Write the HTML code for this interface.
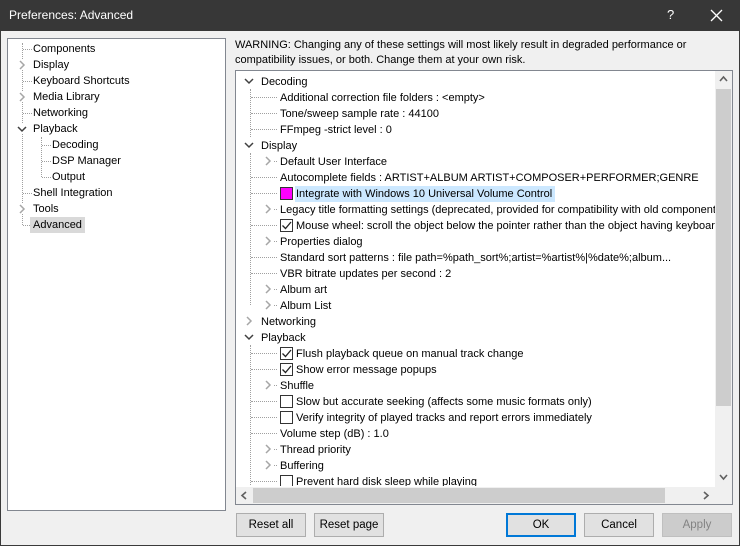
<!DOCTYPE html>
<html><head><meta charset="utf-8"><style>
*{margin:0;padding:0;box-sizing:border-box}
body{width:740px;height:546px;position:relative;overflow:hidden;background:#f0f0f0;font-family:"Liberation Sans",sans-serif;font-size:11px;color:#000}
.title{position:absolute;left:0;top:0;width:740px;height:31px;background:#373737;color:#fff;font-size:12px}
.frame{position:absolute;left:0;top:31px;width:740px;height:515px;border:1px solid #3a3a3a;border-top:none}
.box{position:absolute;background:#fff;border:1px solid #828790;overflow:hidden}
.r{position:absolute;height:16px;line-height:16px;white-space:nowrap}
.v{position:absolute;border-left:1px dotted #a0a0a0;width:0}
.h{position:absolute;border-top:1px dotted #a0a0a0;height:0}
.c{position:absolute;width:10px;height:10px;background:#fff}
.cb{position:absolute;width:13px;height:13px;border:1px solid #333;background:#fff}
.btn{position:absolute;top:513px;height:24px;border:1px solid #adadad;background:#e1e1e1;text-align:center;line-height:22px;font-size:11.5px}
</style></head><body>
<div class="title"><span style="position:absolute;left:9px;top:8px">Preferences: Advanced</span>
<span style="position:absolute;left:667px;top:7px;font-size:13px">?</span>
<svg style="position:absolute;left:710px;top:9px" width="13" height="13"><path d="M1 1L12 12M12 1L1 12" stroke="#fff" stroke-width="1.3"/></svg></div>
<div class="frame"></div>

<div class="box" style="left:7px;top:38px;width:219px;height:473px">
<div class="v" style="left:14px;top:4px;height:182px"></div>
<div class="v" style="left:33px;top:98px;height:40px"></div>
<div class="h" style="left:15px;top:10px;width:9px"></div>
<div class="h" style="left:15px;top:42px;width:9px"></div>
<div class="h" style="left:15px;top:74px;width:9px"></div>
<div class="h" style="left:15px;top:154px;width:9px"></div>
<div class="h" style="left:15px;top:186px;width:9px"></div>
<div class="h" style="left:34px;top:106px;width:9px"></div>
<div class="h" style="left:34px;top:122px;width:9px"></div>
<div class="h" style="left:34px;top:138px;width:9px"></div>
<svg class="c" style="left:9px;top:21px"><path d="M3 1L7 5L3 9" stroke="#a6a6a6" fill="none" stroke-width="1.5"/></svg>
<svg class="c" style="left:9px;top:53px"><path d="M3 1L7 5L3 9" stroke="#a6a6a6" fill="none" stroke-width="1.5"/></svg>
<svg class="c" style="left:9px;top:85px"><path d="M1 3L5 7L9 3" stroke="#404040" fill="none" stroke-width="1.5"/></svg>
<svg class="c" style="left:9px;top:165px"><path d="M3 1L7 5L3 9" stroke="#a6a6a6" fill="none" stroke-width="1.5"/></svg>
<div class="r" style="left:25px;top:2px">Components</div>
<div class="r" style="left:25px;top:18px">Display</div>
<div class="r" style="left:25px;top:34px">Keyboard Shortcuts</div>
<div class="r" style="left:25px;top:50px">Media Library</div>
<div class="r" style="left:25px;top:66px">Networking</div>
<div class="r" style="left:25px;top:82px">Playback</div>
<div class="r" style="left:44px;top:98px">Decoding</div>
<div class="r" style="left:44px;top:114px">DSP Manager</div>
<div class="r" style="left:44px;top:130px">Output</div>
<div class="r" style="left:25px;top:146px">Shell Integration</div>
<div class="r" style="left:25px;top:162px">Tools</div>
<div class="r" style="left:22px;top:178px;background:#d9d9d9;padding:0 3px">Advanced</div>
</div>

<div style="position:absolute;left:235px;top:38px;line-height:15px;width:495px">WARNING: Changing any of these settings will most likely result in degraded performance or compatibility issues, or both. Change them at your own risk.</div>

<div class="box" style="left:235px;top:70px;width:498px;height:435px">
<div style="position:absolute;left:0;top:0;width:479px;height:415px;overflow:hidden">
<div class="v" style="left:14px;top:18px;height:48px"></div>
<div class="v" style="left:14px;top:82px;height:152px"></div>
<div class="v" style="left:14px;top:274px;height:150px"></div>
<div class="h" style="left:15px;top:26px;width:26px"></div>
<div class="h" style="left:15px;top:42px;width:26px"></div>
<div class="h" style="left:15px;top:58px;width:26px"></div>
<div class="h" style="left:15px;top:106px;width:26px"></div>
<div class="h" style="left:15px;top:122px;width:26px"></div>
<div class="h" style="left:15px;top:154px;width:26px"></div>
<div class="h" style="left:15px;top:186px;width:26px"></div>
<div class="h" style="left:15px;top:202px;width:26px"></div>
<div class="h" style="left:15px;top:282px;width:26px"></div>
<div class="h" style="left:15px;top:298px;width:26px"></div>
<div class="h" style="left:15px;top:330px;width:26px"></div>
<div class="h" style="left:15px;top:346px;width:26px"></div>
<div class="h" style="left:15px;top:362px;width:26px"></div>
<div class="h" style="left:15px;top:410px;width:26px"></div>
<div class="h" style="left:38px;top:90px;width:3px"></div>
<div class="h" style="left:38px;top:138px;width:3px"></div>
<div class="h" style="left:38px;top:170px;width:3px"></div>
<div class="h" style="left:38px;top:218px;width:3px"></div>
<div class="h" style="left:38px;top:234px;width:3px"></div>
<div class="h" style="left:38px;top:314px;width:3px"></div>
<div class="h" style="left:38px;top:378px;width:3px"></div>
<div class="h" style="left:38px;top:394px;width:3px"></div>
<svg class="c" style="left:8px;top:5px"><path d="M1 3L5 7L9 3" stroke="#404040" fill="none" stroke-width="1.5"/></svg>
<svg class="c" style="left:8px;top:69px"><path d="M1 3L5 7L9 3" stroke="#404040" fill="none" stroke-width="1.5"/></svg>
<svg class="c" style="left:8px;top:245px"><path d="M3 1L7 5L3 9" stroke="#a6a6a6" fill="none" stroke-width="1.5"/></svg>
<svg class="c" style="left:8px;top:261px"><path d="M1 3L5 7L9 3" stroke="#404040" fill="none" stroke-width="1.5"/></svg>
<svg class="c" style="left:27px;top:85px"><path d="M3 1L7 5L3 9" stroke="#a6a6a6" fill="none" stroke-width="1.5"/></svg>
<svg class="c" style="left:27px;top:133px"><path d="M3 1L7 5L3 9" stroke="#a6a6a6" fill="none" stroke-width="1.5"/></svg>
<svg class="c" style="left:27px;top:165px"><path d="M3 1L7 5L3 9" stroke="#a6a6a6" fill="none" stroke-width="1.5"/></svg>
<svg class="c" style="left:27px;top:213px"><path d="M3 1L7 5L3 9" stroke="#a6a6a6" fill="none" stroke-width="1.5"/></svg>
<svg class="c" style="left:27px;top:229px"><path d="M3 1L7 5L3 9" stroke="#a6a6a6" fill="none" stroke-width="1.5"/></svg>
<svg class="c" style="left:27px;top:309px"><path d="M3 1L7 5L3 9" stroke="#a6a6a6" fill="none" stroke-width="1.5"/></svg>
<svg class="c" style="left:27px;top:373px"><path d="M3 1L7 5L3 9" stroke="#a6a6a6" fill="none" stroke-width="1.5"/></svg>
<svg class="c" style="left:27px;top:389px"><path d="M3 1L7 5L3 9" stroke="#a6a6a6" fill="none" stroke-width="1.5"/></svg>
<div class="cb" style="left:44px;top:116px;background:#ff00ff"></div>
<div class="cb" style="left:44px;top:148px"><svg width="11" height="11" style="position:absolute;left:0;top:0"><path d="M1.5 5.5L4.5 8.5L10 2" stroke="#222" fill="none" stroke-width="1.3"/></svg></div>
<div class="cb" style="left:44px;top:276px"><svg width="11" height="11" style="position:absolute;left:0;top:0"><path d="M1.5 5.5L4.5 8.5L10 2" stroke="#222" fill="none" stroke-width="1.3"/></svg></div>
<div class="cb" style="left:44px;top:292px"><svg width="11" height="11" style="position:absolute;left:0;top:0"><path d="M1.5 5.5L4.5 8.5L10 2" stroke="#222" fill="none" stroke-width="1.3"/></svg></div>
<div class="cb" style="left:44px;top:324px"></div>
<div class="cb" style="left:44px;top:340px"></div>
<div class="cb" style="left:44px;top:404px"></div>
<div class="r" style="left:25px;top:3px">Decoding</div>
<div class="r" style="left:44px;top:19px">Additional correction file folders : &lt;empty&gt;</div>
<div class="r" style="left:44px;top:35px">Tone/sweep sample rate : 44100</div>
<div class="r" style="left:44px;top:51px">FFmpeg -strict level : 0</div>
<div class="r" style="left:25px;top:67px">Display</div>
<div class="r" style="left:44px;top:83px">Default User Interface</div>
<div class="r" style="left:44px;top:99px">Autocomplete fields : ARTIST+ALBUM ARTIST+COMPOSER+PERFORMER;GENRE</div>
<div class="r" style="left:59px;top:115px;background:#cce8ff;padding:0 3px 0 1px">Integrate with Windows 10 Universal Volume Control</div>
<div class="r" style="left:44px;top:131px">Legacy title formatting settings (deprecated, provided for compatibility with old components)</div>
<div class="r" style="left:60px;top:147px">Mouse wheel: scroll the object below the pointer rather than the object having keyboard focus</div>
<div class="r" style="left:44px;top:163px">Properties dialog</div>
<div class="r" style="left:44px;top:179px">Standard sort patterns : file path=%path_sort%;artist=%artist%|%date%;album...</div>
<div class="r" style="left:44px;top:195px">VBR bitrate updates per second : 2</div>
<div class="r" style="left:44px;top:211px">Album art</div>
<div class="r" style="left:44px;top:227px">Album List</div>
<div class="r" style="left:25px;top:243px">Networking</div>
<div class="r" style="left:25px;top:259px">Playback</div>
<div class="r" style="left:60px;top:275px">Flush playback queue on manual track change</div>
<div class="r" style="left:60px;top:291px">Show error message popups</div>
<div class="r" style="left:44px;top:307px">Shuffle</div>
<div class="r" style="left:60px;top:323px">Slow but accurate seeking (affects some music formats only)</div>
<div class="r" style="left:60px;top:339px">Verify integrity of played tracks and report errors immediately</div>
<div class="r" style="left:44px;top:355px">Volume step (dB) : 1.0</div>
<div class="r" style="left:44px;top:371px">Thread priority</div>
<div class="r" style="left:44px;top:387px">Buffering</div>
<div class="r" style="left:60px;top:403px">Prevent hard disk sleep while playing</div>
</div>
<div style="position:absolute;left:479px;top:0;width:17px;height:416px;background:#f0f0f0">
<svg style="position:absolute;left:4px;top:4px" width="9" height="8"><path d="M1 6L4.5 2L8 6" stroke="#606060" fill="none" stroke-width="1.6"/></svg>
<div style="position:absolute;left:1px;top:18px;width:15px;height:317px;background:#cdcdcd"></div>
<svg style="position:absolute;left:4px;top:402px" width="9" height="8"><path d="M1 2L4.5 6L8 2" stroke="#606060" fill="none" stroke-width="1.6"/></svg>
</div>
<div style="position:absolute;left:0;top:416px;width:479px;height:17px;background:#f0f0f0">
<svg style="position:absolute;left:4px;top:4px" width="8" height="9"><path d="M6 1L2 4.5L6 8" stroke="#606060" fill="none" stroke-width="1.6"/></svg>
<div style="position:absolute;left:17px;top:1px;width:412px;height:15px;background:#cdcdcd"></div>
<svg style="position:absolute;left:466px;top:4px" width="8" height="9"><path d="M2 1L6 4.5L2 8" stroke="#606060" fill="none" stroke-width="1.6"/></svg>
</div>
<div style="position:absolute;left:479px;top:416px;width:17px;height:17px;background:#f0f0f0"></div>
</div>

<div class="btn" style="left:236px;width:70px">Reset all</div>
<div class="btn" style="left:314px;width:70px">Reset page</div>
<div class="btn" style="left:506px;width:70px;border:2px solid #0078d7;line-height:20px">OK</div>
<div class="btn" style="left:584px;width:70px">Cancel</div>
<div class="btn" style="left:662px;width:70px;background:#cccccc;border-color:#bfbfbf;color:#838383">Apply</div>
</body></html>
